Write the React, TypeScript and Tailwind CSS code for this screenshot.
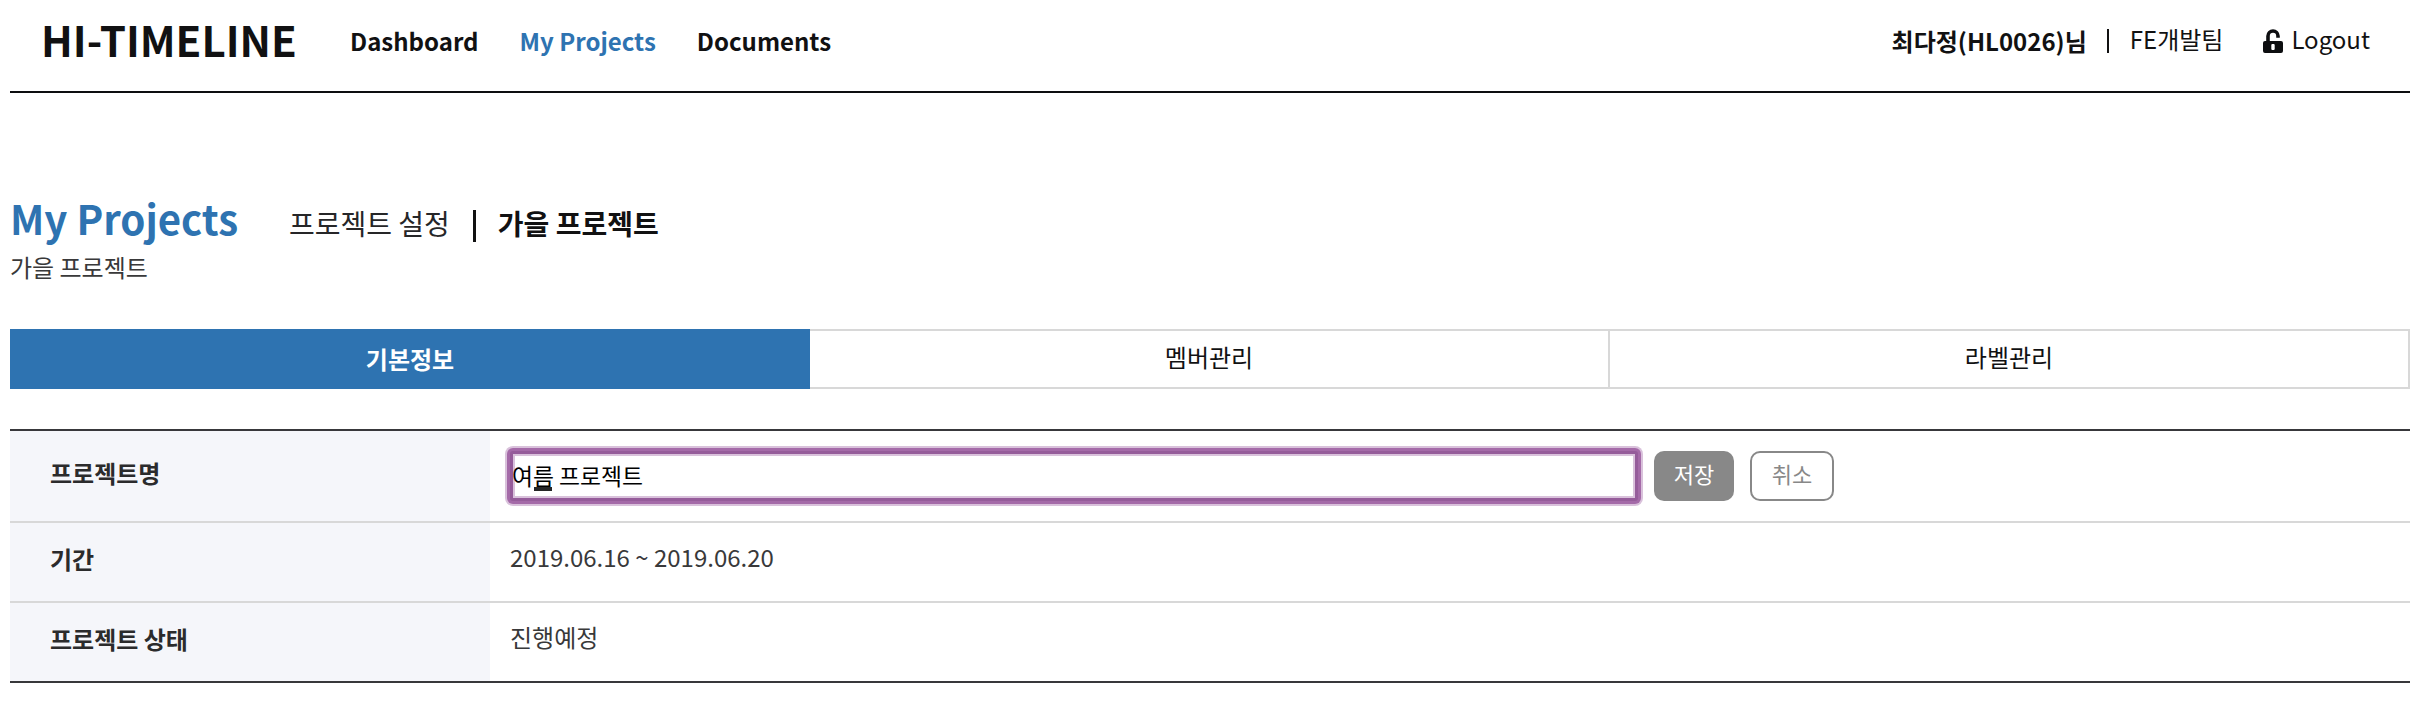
const tabs = ['멤버관리', '라벨관리'];

function LockIcon() {
  return (
    <svg className="h-[25px] w-5" viewBox="0 0 20 25" fill="none">
      <path d="M5 12V7a5 5 0 0 1 10 0V8.8" stroke="#0d0e10" strokeWidth="3.6" />
      <path fillRule="evenodd" fill="#0d0e10" d="M2 12h16a2 2 0 0 1 2 2v8a2 2 0 0 1-2 2H2a2 2 0 0 1-2-2v-8a2 2 0 0 1 2-2zM9 15h2l.7.7v4.6l-.7.7h-2l-.7-.7v-4.6z" />
    </svg>
  );
}

function Label({ children }: { children: string }) {
  return <div className="flex w-[480px] items-center bg-[#f5f6fa] pb-[7px] pl-10 font-bold text-[#2b2b2c]">{children}</div>;
}

export default function App() {
  return (
    <div className="h-[714px] w-[2431px] overflow-hidden bg-white pr-[21px] pl-[10px] font-['Noto_Sans_CJK_KR',sans-serif] text-[24px] leading-[36px] text-[#111112]">
      <header className="flex h-[93px] items-start border-b-2 border-[#0d0e10] pr-[39px] pl-[31px]">
        <h1 className="mt-[7px] w-[309px] text-[42px] leading-[64px] font-bold">HI-TIMELINE</h1>
        <nav className="mt-[23px] flex gap-[41px] font-bold">
          <a>Dashboard</a>
          <a className="text-[#2e73b1]">My Projects</a>
          <a>Documents</a>
        </nav>
        <div className="mt-[21px] ml-auto flex">
          <span className="mt-0.5 font-bold">최다정(HL0026)님</span>
          <span className="mr-[21px] ml-5 mt-2 h-6 w-0.5 bg-[#111112]" />
          <span>FE개발팀</span>
          <span className="mt-2 mr-2 ml-10"><LockIcon /></span>
          <span className="pr-px">Logout</span>
        </div>
      </header>
      <main>
        <div className="mt-[96px] flex h-[61px] items-start text-[28px] leading-[42px]">
          <h2 className="-mt-px w-[279px] text-[40.2px] leading-[60px] font-bold text-[#2e73b1]">My Projects</h2>
          <span className="mt-[13px] text-[#262628]">프로젝트 설정</span>
          <span className="mr-[22px] ml-[23px] mt-[21px] h-8 w-[3px] bg-[#111112]" />
          <span className="mt-[13px] font-bold">가을 프로젝트</span>
        </div>
        <p className="-mt-px text-[#39393a]">가을 프로젝트</p>
        <div className="mt-11 flex h-[60px] text-center">
          <div className="w-[800px] bg-[#2e73b1] pt-3 font-bold text-white">기본정보</div>
          {tabs.map((t) => (
            <div key={t} className="w-[800px] border-y-2 border-r-2 border-[#d8d8d8] pt-2">{t}</div>
          ))}
        </div>
        <section className="mt-10 border-y-2 border-[#38383b] text-[#39393a]">
          <div className="flex h-[92px] border-b-2 border-[#d8d8d8]">
            <Label>프로젝트명</Label>
            <div className="flex items-center pl-[15px]">
              <div className="rounded-[8px] bg-[#d9c1db] p-0.5">
                <div className="rounded-[6px] bg-[#a46aa8] p-[3px]">
                  <div className="rounded-[3px] bg-[#955c9a] p-[3px]">
                    <div className="bg-[#d9c1db] p-0.5">
                      <div className="h-10 w-[1118px] bg-white text-[22.8px] leading-[39px] text-black">
                        <div className="-ml-[3px] whitespace-nowrap">
                          여<span className="relative">름<span className="absolute bottom-px left-[1px] h-1 w-[18px] bg-[#262626]" /></span> 프로젝트
                        </div>
                      </div>
                    </div>
                  </div>
                </div>
              </div>
              <button className="ml-[11px] h-[50px] w-20 rounded-[10px] bg-[#888] pb-[6px] text-[22px] text-white">저장</button>
              <button className="ml-4 h-[50px] w-21 rounded-[10px] border-2 border-[#888] pb-[6px] text-[22px] text-[#888]">취소</button>
            </div>
          </div>
          <div className="flex h-20 border-b-2 border-[#d8d8d8]">
            <Label>기간</Label>
            <div className="pt-4 pl-5">2019.06.16 ~ 2019.06.20</div>
          </div>
          <div className="flex h-[78px]">
            <Label>프로젝트 상태</Label>
            <div className="pt-4 pl-5">진행예정</div>
          </div>
        </section>
      </main>
    </div>
  );
}
